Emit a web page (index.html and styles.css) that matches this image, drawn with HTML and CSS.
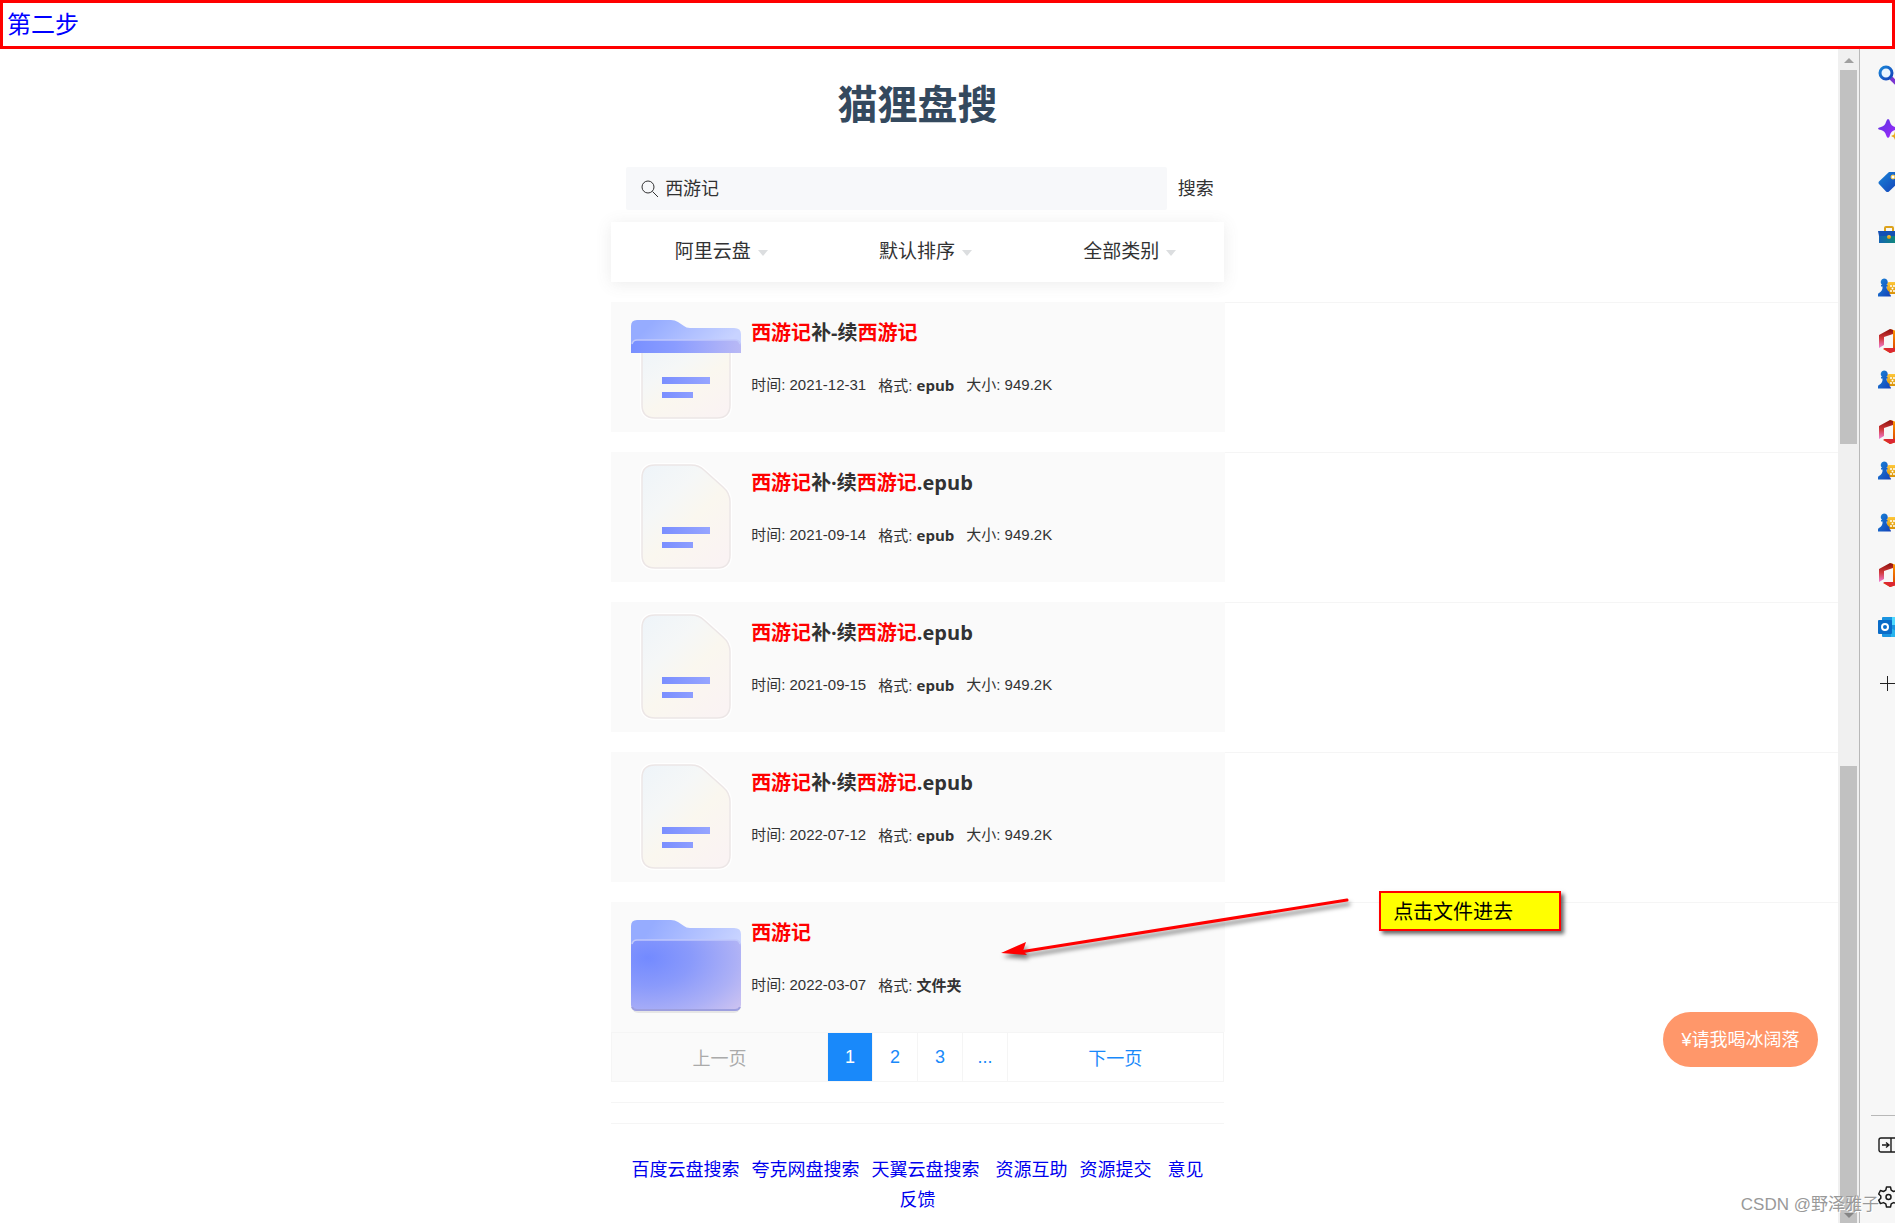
FILE: index.html
```html
<!DOCTYPE html>
<html lang="zh-CN">
<head>
<meta charset="utf-8">
<title>猫狸盘搜</title>
<link rel="stylesheet" href="styles.css">
</head>
<body>
<svg class="defs" aria-hidden="true">
  <defs>
    <linearGradient id="back" x1="0" y1="0" x2="1" y2="0.3"><stop offset="0.2" stop-color="#96acff"/><stop offset="1" stop-color="#c8d3ff"/></linearGradient>
    <linearGradient id="flap" x1="0" y1="0" x2="1" y2="0"><stop offset="0" stop-color="#788fff"/><stop offset="0.4" stop-color="#8a9cff"/><stop offset="1" stop-color="#b9b9f5"/></linearGradient>
    <radialGradient id="front" cx="0.15" cy="0.25" r="1.15"><stop offset="0" stop-color="#738aff"/><stop offset="0.35" stop-color="#8a9afb"/><stop offset="0.7" stop-color="#acb0f6"/><stop offset="1" stop-color="#d2c6f0"/></radialGradient>
    <linearGradient id="paper" x1="0" y1="0" x2="0.8" y2="1"><stop offset="0" stop-color="#eef4f9"/><stop offset="0.35" stop-color="#f5f7f7"/><stop offset="0.6" stop-color="#faf7ef"/><stop offset="1" stop-color="#faf3f3"/></linearGradient>
    <linearGradient id="bar" x1="0" y1="0" x2="1" y2="0"><stop offset="0" stop-color="#7a8fff"/><stop offset="1" stop-color="#96a5ff"/></linearGradient>
    <linearGradient id="blue" x1="0" y1="0" x2="1" y2="1"><stop offset="0" stop-color="#1a86d8"/><stop offset="1" stop-color="#1440b8"/></linearGradient>
    <linearGradient id="violet" x1="0" y1="0" x2="1" y2="1"><stop offset="0" stop-color="#5a35e0"/><stop offset="1" stop-color="#a428ff"/></linearGradient>
    <linearGradient id="gold" x1="0" y1="0" x2="0" y2="1"><stop offset="0" stop-color="#ffc83a"/><stop offset="1" stop-color="#d99208"/></linearGradient>
    <linearGradient id="teal" x1="0" y1="0" x2="1" y2="0"><stop offset="0" stop-color="#1464b4"/><stop offset="1" stop-color="#0f9468"/></linearGradient>
    <linearGradient id="pink" x1="0" y1="0" x2="0" y2="1"><stop offset="0" stop-color="#8c0f0a"/><stop offset="0.5" stop-color="#d23a3c"/><stop offset="1" stop-color="#f080d8"/></linearGradient>
    <linearGradient id="orange" x1="0" y1="0" x2="0" y2="1"><stop offset="0" stop-color="#ff9a00"/><stop offset="1" stop-color="#d83b01"/></linearGradient>
    <symbol id="doc" viewBox="0 0 110 110">
      <path d="M24 3H60Q68 3 73 8L92 25Q99 31 99 40V93Q99 106 86 106H24Q11 106 11 93V16Q11 3 24 3Z" fill="url(#paper)" stroke="#fff" stroke-width="4"/>
      <path d="M24 3H60Q68 3 73 8L92 25Q99 31 99 40V93Q99 106 86 106H24Q11 106 11 93V16Q11 3 24 3Z" fill="url(#paper)" stroke="#ece6e6" stroke-width="1.500"/>
      <path d="M31 65H79V72H31ZM31 80H62V86H31Z" fill="url(#bar)"/>
    </symbol>
    <symbol id="folder-doc" viewBox="0 0 110 110">
      <path d="M11 36H99V93Q99 106 86 106H24Q11 106 11 93Z" fill="url(#paper)" stroke="#fff" stroke-width="4"/>
      <path d="M11 36H99V93Q99 106 86 106H24Q11 106 11 93Z" fill="url(#paper)" stroke="#ece6e6" stroke-width="1.500"/>
      <path d="M31 65H79V72H31ZM31 80H62V86H31Z" fill="url(#bar)"/>
      <path d="M0 41V14Q0 8 6 8H40Q44 8 47 10L53 14Q55 16 59 16H103Q110 16 110 22V41Z" fill="url(#back)"/>
      <path d="M0 41V34Q0 28 6 28H104Q110 28 110 34V41Z" fill="url(#flap)"/>
      <path d="M1 32Q2 28 6 28H104Q108 28 109 32" fill="none" stroke="#c0c8fb" stroke-width="1.500"/>
    </symbol>
    <symbol id="folder" viewBox="0 0 110 110">
      <path d="M0 60V14Q0 8 6 8H40Q44 8 47 10L53 14Q55 16 59 16H103Q110 16 110 22V60Z" fill="url(#back)"/>
      <rect x="1" y="32" width="108" height="69" rx="6" fill="#000" opacity="0.08"/>
      <rect y="28" width="110" height="71" rx="6" fill="url(#front)"/>
      <path d="M1 32Q2 28 6 28H104Q108 28 109 32" fill="none" stroke="#c0c8fb" stroke-width="1.500"/>
      <path d="M1 95Q2 98 6 98H104Q108 98 109 95" fill="none" stroke="#9d9fdf" stroke-width="2"/>
    </symbol>
    <symbol id="chess" viewBox="0 0 24 24">
      <rect x="9" y="6" width="16" height="12" rx="2" fill="url(#gold)"/>
      <g fill="#fff"><circle cx="13" cy="10" r="1"/><circle cx="16" cy="10" r="1"/><circle cx="14.500" cy="12.500" r="1"/><circle cx="13" cy="15" r="1"/><circle cx="16" cy="15" r="1"/></g>
      <path d="M6 2.500A3.700 3.700 0 0 1 8.500 9H9.500V10.500H8.500Q8.500 14 11.500 16V18Q13 18.500 13 20.500H0V18.500Q0 17 1 17Q5 14.500 4.500 10.500H3V9H4A3.700 3.700 0 0 1 6 2.500Z" fill="url(#blue)"/>
    </symbol>
    <symbol id="office" viewBox="0 0 24 24">
      <path d="M12 0 22 3V21L12 24 5 20 15 20V5Z" fill="url(#orange)"/>
      <path d="M12 0 15 1V5L6 8V16L1 19V6Z" fill="url(#pink)"/>
      <path d="M5 19H17L18 22 12 24Z" fill="#dc2832"/>
    </symbol>
  </defs>
</svg>

<header class="banner">第二步</header>

<div class="window">
  <main class="content">
    <div class="column">
      <h1 class="logo">猫狸盘搜</h1>
      <form class="search">
        <label class="field">
          <svg class="glass" viewBox="0 0 18 18" fill="none" stroke="#323233" stroke-width="1"><circle cx="7" cy="7" r="6"/><path d="M11.500 11.500 17 17"/></svg>
          <input class="query" type="text" value="西游记" aria-label="搜索关键词">
        </label>
        <button class="go" type="button">搜索</button>
      </form>
      <div class="filters">
        <div class="filter"><span class="pick"><select aria-label="网盘"><option>阿里云盘</option></select></span></div>
        <div class="filter"><span class="pick"><select aria-label="排序"><option>默认排序</option></select></span></div>
        <div class="filter"><span class="pick"><select aria-label="类别"><option>全部类别</option></select></span></div>
      </div>
    </div>

    <ul class="results">
      <li class="row"><article class="card">
        <svg class="thumb"><use href="#folder-doc"/></svg>
        <div class="info"><h2 class="name"><em>西游记</em>补-续<em>西游记</em></h2>
        <p class="meta"><span>时间: 2021-12-31</span><span>格式: <b>epub</b></span><span>大小: 949.2K</span></p></div>
      </article></li>
      <li class="row"><article class="card">
        <svg class="thumb"><use href="#doc"/></svg>
        <div class="info"><h2 class="name"><em>西游记</em>补·续<em>西游记</em>.epub</h2>
        <p class="meta"><span>时间: 2021-09-14</span><span>格式: <b>epub</b></span><span>大小: 949.2K</span></p></div>
      </article></li>
      <li class="row"><article class="card">
        <svg class="thumb"><use href="#doc"/></svg>
        <div class="info"><h2 class="name"><em>西游记</em>补·续<em>西游记</em>.epub</h2>
        <p class="meta"><span>时间: 2021-09-15</span><span>格式: <b>epub</b></span><span>大小: 949.2K</span></p></div>
      </article></li>
      <li class="row"><article class="card">
        <svg class="thumb"><use href="#doc"/></svg>
        <div class="info"><h2 class="name"><em>西游记</em>补·续<em>西游记</em>.epub</h2>
        <p class="meta"><span>时间: 2022-07-12</span><span>格式: <b>epub</b></span><span>大小: 949.2K</span></p></div>
      </article></li>
      <li class="row"><article class="card">
        <svg class="thumb"><use href="#folder"/></svg>
        <div class="info"><h2 class="name"><em>西游记</em></h2>
        <p class="meta"><span>时间: 2022-03-07</span><span>格式: <b>文件夹</b></span></p></div>
      </article>
        <svg class="arrow" viewBox="0 0 360 76"><path d="M347 7 20 59" stroke="#f00" stroke-width="3" stroke-linecap="round"/><path d="M1 60 26 49 23 58 27 62Z" fill="#f00"/></svg>
        <div class="note">点击文件进去</div>
      </li>
    </ul>

    <div class="column">
      <nav class="pages" aria-label="分页">
        <button class="page step" type="button" disabled>上一页</button>
        <button class="page current" type="button">1</button>
        <button class="page" type="button">2</button>
        <button class="page" type="button">3</button>
        <button class="page" type="button">...</button>
        <button class="page step" type="button">下一页</button>
      </nav>
      <div class="divider"></div>
      <footer class="links"><a href="#">百度云盘搜索</a><a href="#">夸克网盘搜索</a><a href="#">天翼云盘搜索</a><a class="wide" href="#">资源互助</a><a href="#">资源提交</a><a class="wide" href="#">意见反馈</a></footer>
    </div>
  </main>

  <div class="scroll" aria-hidden="true">
    <svg class="tip" viewBox="0 0 10 5"><path d="M5 0 10 5H0Z" fill="#a0a0a0"/></svg>
    <div class="bar upper"></div>
    <div class="bar lower"><svg class="tip" viewBox="0 0 10 5"><path d="M0 0H10L5 5Z" fill="#858585"/></svg></div>
  </div>

  <aside class="side">
    <div class="group first">
      <svg class="icon" viewBox="0 0 24 24"><path d="M13 14 22 23" stroke="#7a35d0" stroke-width="4"/><circle cx="8" cy="9" r="6" fill="#eaf6ff" stroke="url(#blue)" stroke-width="3"/></svg>
      <svg class="icon" viewBox="0 0 24 24"><path d="M10 2Q11.500 2 12 5Q13 9 17 10Q20 11 20 12Q20 13 17 13Q13 14 12 18Q11.500 21 10 21Q9 21 8 18Q7 14 3 13Q0 12.500 0 11.500Q0 10.500 3 10Q7 9 8 5Q9 2 10 2Z" fill="url(#violet)"/><path d="M17 14 18.500 17.500 22 19 18.500 20.500 17 23 16 20.500 13 19 16 17.500Z" fill="url(#gold)"/></svg>
      <svg class="icon" viewBox="0 0 24 24"><path d="M11 2H20V13L11 21.500Q9.500 22.500 8 21.500L1 14Q0 12.500 1 11.500Z" fill="url(#blue)"/><circle cx="15" cy="7" r="2" fill="#fff" stroke="#ffc83a" stroke-width="1"/></svg>
      <svg class="icon" viewBox="0 0 24 24"><path d="M7 8V5Q7 4 8 4H14Q15 4 15 5V8" fill="none" stroke="#dda31c" stroke-width="2"/><path d="M1 12H23V20H1Z" fill="url(#teal)"/><path d="M0 8H23V13H1Z" fill="#1450b4"/><circle cx="11" cy="14" r="2" fill="url(#gold)"/></svg>
      <svg class="icon"><use href="#chess"/></svg>
      <svg class="icon"><use href="#office"/></svg>
    </div>
    <div class="group">
      <svg class="icon"><use href="#chess"/></svg>
      <svg class="icon"><use href="#office"/></svg>
    </div>
    <div class="group">
      <svg class="icon"><use href="#chess"/></svg>
      <svg class="icon"><use href="#chess"/></svg>
      <svg class="icon"><use href="#office"/></svg>
      <svg class="icon" viewBox="0 0 24 24"><rect x="4" y="2" width="20" height="20" rx="1" fill="#1a94e0"/><path d="M14 2H24V10H14Z" fill="#50d9ff"/><path d="M13 13 24 20V22H13Z" fill="#28b4ee"/><rect x="0" y="5" width="14" height="14" rx="1" fill="#0a6cc8"/><circle cx="7" cy="12" r="3" fill="none" stroke="#fff" stroke-width="2"/></svg>
    </div>
    <svg class="icon plus" viewBox="0 0 24 24"><path d="M2 11.500H18M9.500 4V19" stroke="#222" stroke-width="1"/></svg>
    <div class="tools">
      <svg class="icon" viewBox="0 0 24 24" fill="none" stroke="#1a1a1a" stroke-width="1.400"><rect x="1" y="5" width="20" height="14" rx="2"/><path d="M13 5V19M4 12H11M8 9.500 11 12 8 14.500"/></svg>
      <svg class="icon" viewBox="0 0 24 24" fill="none" stroke="#1a1a1a" stroke-width="1.500" stroke-linejoin="round"><path d="M8.500 2H12.500L13.200 5.200 15.500 6.500 18.600 5.500 20.500 9 18.200 11V13.200L20.500 15.200 18.600 18.600 15.500 17.600 13.200 18.900 12.500 22H8.500L7.800 18.900 5.500 17.600 2.400 18.600 0.700 15.200 2.800 13.200V11L0.700 9 2.400 5.500 5.500 6.500 7.800 5.200Z"/><circle cx="10.500" cy="12" r="2.500"/></svg>
    </div>
  </aside>
</div>

<button class="donate" type="button">¥请我喝冰阔落</button>
<div class="watermark">CSDN @野泽雅子</div>
</body>
</html>
```
FILE: styles.css
```css
* { box-sizing: border-box; }

body {
  margin: 0;
  min-height: 100vh;
  display: flex;
  flex-direction: column;
  position: relative;
  overflow-x: hidden;
  background: #fff;
  color: #323233;
  font-family: "Liberation Sans", "Noto Sans CJK SC", sans-serif;
}

h1, h2, p, ul { margin: 0; padding: 0; }
button, input, select {
  font: inherit;
  color: inherit;
  border: 0;
  padding: 0;
  margin: 0;
  background: none;
}
.defs { position: absolute; width: 0; height: 0; }

.banner {
  border: 3px solid #f00;
  padding: 4px 4px 3px;
  color: #00f;
  font-size: 24px;
  line-height: 36px;
}

.window { flex: 1; display: flex; }
.content { flex: 1; min-width: 0; }
.column { width: 33.333%; margin-left: 33.25%; }

.logo {
  padding-top: 26px;
  color: #34495e;
  font-size: 40px;
  line-height: 60px;
  font-weight: 700;
  text-align: center;
}

.search {
  display: flex;
  gap: 11px;
  padding: 32px 10px 12px 15px;
  font-size: 18px;
}
.field {
  flex: 1;
  display: flex;
  align-items: center;
  gap: 6px;
  height: 43px;
  padding: 0 15px;
  border-radius: 2px;
  background: #f7f8fa;
}
.glass { width: 18px; height: 18px; }
.query { flex: 1; min-width: 0; outline: 0; }
.query, .go { padding-bottom: 4px; }

.filters {
  display: flex;
  height: 60px;
  background: #fff;
  box-shadow: 0 2px 15px rgba(100, 101, 102, 0.12);
}
.filter {
  flex: 1;
  display: flex;
  align-items: center;
  justify-content: center;
  font-size: 19px;
}
.pick { position: relative; }
.pick select { appearance: none; }
.pick::after {
  content: "";
  position: absolute;
  left: calc(100% + 6px);
  top: calc(50% - 2px);
  border: 5px solid transparent;
  border-top: 6px solid #dcdee0;
  border-bottom: 0;
}

.results {
  list-style: none;
  margin: 20px 0 0 33.25%;
  display: grid;
  gap: 20px;
}
.row {
  position: relative;
  background: linear-gradient(#f5f5f5, #f5f5f5) top / 100% 1px no-repeat;
}
.card {
  display: flex;
  gap: 10px;
  width: 50%;
  height: 130px;
  padding: 10px 20px;
  background: #fafafa;
}
.thumb { width: 110px; height: 110px; flex: none; }
.info { padding-top: 6px; }
.name {
  font-family: "Open Sans", "Noto Sans CJK SC", sans-serif;
  font-size: 20px;
  line-height: 30px;
  font-weight: 700;
}
.name em { font-style: normal; color: #f00; }
.meta {
  display: flex;
  gap: 12px;
  padding-top: 25px;
  font-size: 15px;
  line-height: 24px;
}
.meta b { font-family: "Open Sans", "Noto Sans CJK SC", sans-serif; font-weight: 700; }

.arrow {
  position: absolute;
  left: 389px;
  top: -9px;
  width: 360px;
  height: 76px;
  filter: drop-shadow(2px 4px 2px rgba(0, 0, 0, 0.5));
}
.note {
  position: absolute;
  left: 768px;
  top: -11px;
  width: 182px;
  padding: 4px 12px 2px;
  border: 2px solid #f00;
  background: #ff0;
  color: #000;
  font-size: 20px;
  line-height: 30px;
  box-shadow: 3px 3px 4px rgba(0, 0, 0, 0.6);
}

.pages {
  display: flex;
  height: 50px;
  border: 1px solid #f5f5f5;
  font-size: 18px;
}
.page {
  width: 45px;
  color: #1989fa;
  border-left: 1px solid #f5f5f5;
}
.page.step { flex: 1; }
.page:disabled { background: #fafafa; color: #aaa; border-left: 0; }
.page.current { background: #1989fa; color: #fff; }

.divider {
  height: 22px;
  margin-top: 20px;
  border: solid #f5f5f5;
  border-width: 1px 0;
}
.links {
  padding: 31px 19px 0;
  font-size: 18px;
  line-height: 30px;
  text-align: center;
}
.links a { color: #00e; text-decoration: none; }
.links a + a { margin-left: 12px; }
.links a + a.wide { margin-left: 16px; }

.scroll {
  width: 22px;
  display: flex;
  flex-direction: column;
  align-items: center;
  padding-top: 9px;
  background: #f0f0f0;
  border-right: 1px solid #b8b8b8;
}
.tip { width: 10px; height: 5px; flex: none; }
.bar { width: 17px; background: #c1c1c1; }
.upper { flex: 374 0 0px; margin-top: 7px; }
.lower {
  flex: 457 0 0px;
  margin-top: 322px;
  display: flex;
  align-items: flex-end;
  justify-content: center;
}
.lower .tip { margin-bottom: 5px; }

.side {
  width: 35px;
  display: flex;
  flex-direction: column;
  padding: 15px 0 14px 18px;
  overflow: hidden;
  background: #f7f7f7;
}
.icon { width: 24px; height: 24px; flex: none; display: block; }
.group { display: grid; gap: 28px; margin-bottom: 15px; }
.group.first { gap: 29px; }
.plus { margin-top: 18px; }
.tools {
  display: grid;
  gap: 28px;
  margin: auto 0 0 -7px;
  padding: 17px 0 0 7px;
  border-top: 1px solid #b8b8b8;
}

.donate {
  position: fixed;
  right: 77px;
  bottom: 156px;
  width: 155px;
  height: 55px;
  padding-bottom: 3px;
  border-radius: 28px;
  background: #ff976a;
  color: #fff;
  font-size: 18px;
}
.watermark {
  position: absolute;
  right: 16px;
  bottom: 6px;
  font-size: 17px;
  line-height: 24px;
  color: #999;
  text-shadow: 1px 1px 0 #fff;
}
```
